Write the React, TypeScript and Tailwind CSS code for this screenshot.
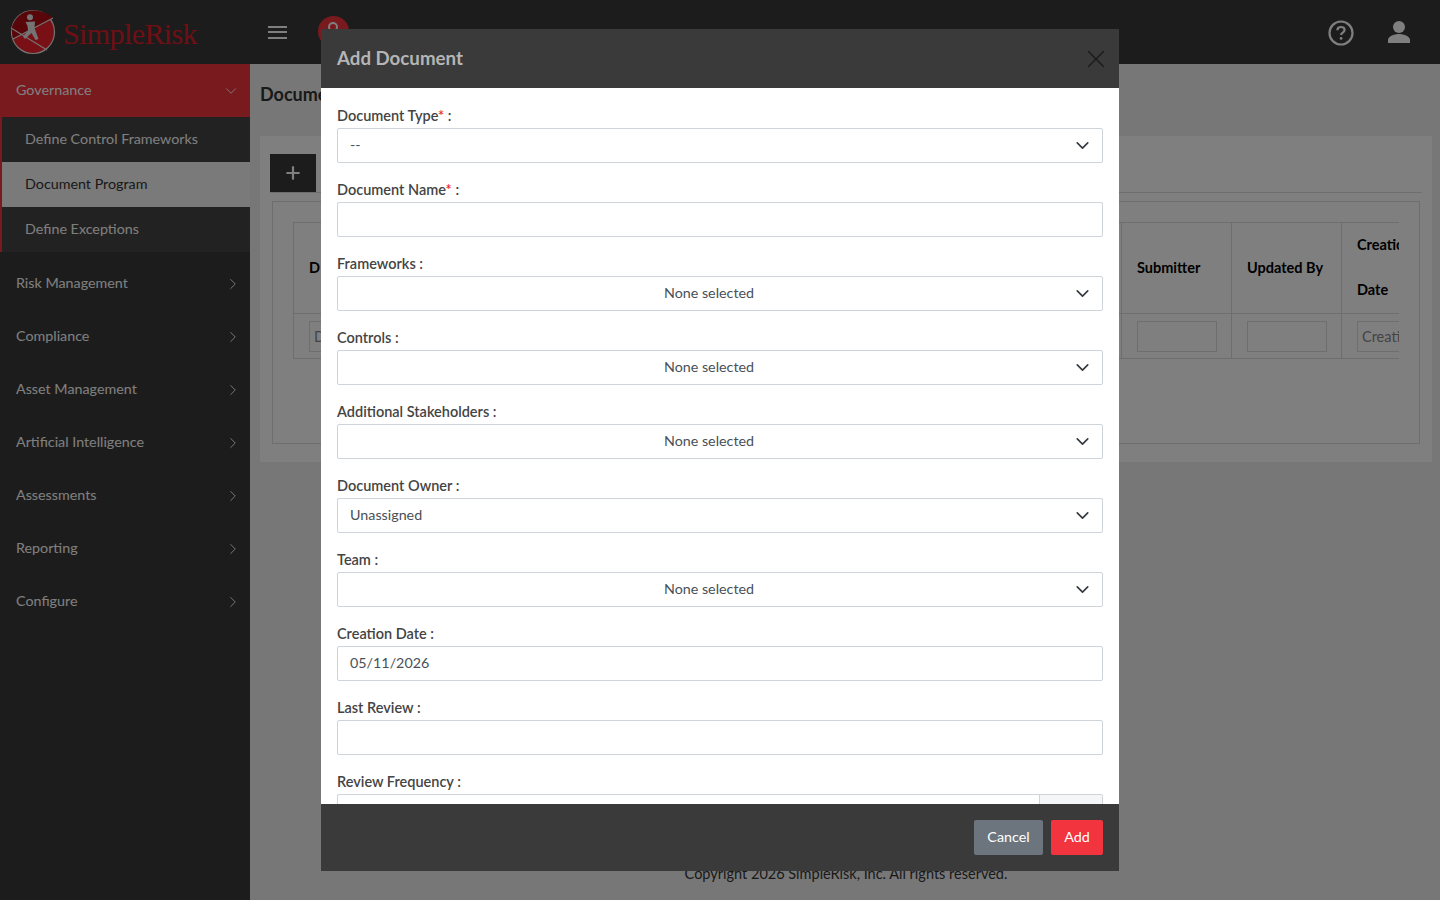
import { ChevronDown, ChevronRight, X, Plus } from 'lucide-react';

const subItems = ['Define Control Frameworks', 'Document Program', 'Define Exceptions'];
const navItems = [
  'Risk Management',
  'Compliance',
  'Asset Management',
  'Artificial Intelligence',
  'Assessments',
  'Reporting',
  'Configure',
];

function Logo() {
  return (
    <svg width="46" height="46" viewBox="0 0 46 46" className="shrink-0">
      <circle cx="23" cy="23" r="21.5" fill="#f0202a" stroke="#e8e8e8" strokeWidth="1.2" />
      <path d="M3 30 L43 9 C38 4 30 1.5 23 1.5 C12 1.5 3 10 1.6 20 Z" fill="#b30d14" />
      <path d="M1 19 L37 41 M3 30 L43 9" stroke="#e8e8e8" strokeWidth="1.2" fill="none" />
      <circle cx="20" cy="8.3" r="3" fill="#e8e8e8" />
      <path d="M15.5 13 L25 12.5 L24.5 19 L28.5 30 L25.5 31 L21.5 24 L15 30 L13 27.5 L18 21.5 L17.5 17 Z" fill="#e8e8e8" />
    </svg>
  );
}

function TopBar() {
  return (
    <div className="h-16 bg-[#393939] flex items-center shrink-0">
      <div className="w-[250px] pl-[10px] flex items-center gap-[7px] shrink-0">
        <Logo />
        <span className="mt-[3px] text-[30px] leading-none text-[#dd1f2a] tracking-[-0.6px] font-['Liberation_Serif',serif]">SimpleRisk</span>
      </div>
      <div className="ml-[18px] flex flex-col gap-[3.5px] w-[19px]">
        <div className="h-[2px] bg-white" />
        <div className="h-[2px] bg-white" />
        <div className="h-[2px] bg-white" />
      </div>
      <svg width="31" height="31" viewBox="0 0 31 31" className="ml-[31px] mb-[2px]">
        <circle cx="15.5" cy="15.5" r="15.5" fill="#f2343e" />
        <circle cx="15" cy="11" r="4" fill="none" stroke="#fff" strokeWidth="2" />
      </svg>
      <div className="ml-auto flex items-center gap-[32px] pr-[29px]">
        <svg width="28" height="28" viewBox="0 0 28 28" fill="none" className="mt-[2px]">
          <circle cx="14" cy="14" r="11.5" stroke="#fff" strokeWidth="2.2" />
          <path d="M10.4 11.2c0-2.1 1.6-3.2 3.6-3.2s3.6 1.1 3.6 3c0 2.7-3.5 2.6-3.5 5" stroke="#fff" strokeWidth="2.2" fill="none" />
          <circle cx="14.1" cy="19.4" r="1.4" fill="#fff" />
        </svg>
        <svg width="24" height="24" viewBox="0 0 24 24" fill="#fff">
          <circle cx="12" cy="7" r="6" />
          <path d="M1 23v-3c0-4 7-6 11-6s11 2 11 6v3z" />
        </svg>
      </div>
    </div>
  );
}

function Sidebar() {
  return (
    <div className="w-[250px] shrink-0 bg-[#383838] text-[14.3px] text-white">
      <div className="h-[53px] bg-[#f2343e] flex items-center justify-between pl-4 pr-[10px]">
        <span className="pb-[2px]">Governance</span>
        <ChevronDown size={18} strokeWidth={1.2} />
      </div>
      <div className="border-l-2 border-[#f2343e] mb-[5px]">
        {subItems.map((item) =>
          item === 'Document Program' ? (
            <div key={item} className="h-[45px] flex items-center pl-[23px] pb-[2px] bg-[#f4f4f4] text-[#333]">
              {item}
            </div>
          ) : (
            <div key={item} className="h-[45px] flex items-center pl-[23px] pb-[2px] bg-[#444]">
              {item}
            </div>
          ),
        )}
      </div>
      {navItems.map((item) => (
        <div key={item} className="h-[53px] flex items-center justify-between pl-4 pr-[8px]">
          <span className="pb-[2px]">{item}</span>
          <ChevronRight size={18} strokeWidth={1.2} />
        </div>
      ))}
    </div>
  );
}

function TableCell({ title, title2, filter }: { title: string; title2?: string; filter?: string }) {
  return (
    <div className="w-[110px] shrink-0 border-l border-[#dcdcdc]">
      <div className="h-[91px] pb-[2px] border-b border-[#dcdcdc] flex flex-col justify-center pl-[15px] text-[14.5px] font-bold text-black gap-[22px] leading-[23px]">
        <span>{title}</span>
        {title2 && <span>{title2}</span>}
      </div>
      <div className="h-[44px] pl-[15px] pt-[7px]">
        <div className="h-[31px] w-[80px] border border-[#dcdcdc] pl-1 text-[14.5px] leading-[29px] text-[#888] overflow-hidden whitespace-nowrap">
          {filter}
        </div>
      </div>
    </div>
  );
}

function MainContent() {
  return (
    <div className="flex-1 min-w-0 bg-[#eeeeee] flex flex-col pl-[10px] pr-2">
      <h2 className="text-[18px] font-bold text-[#333] mt-[18px] h-[54px] leading-6">Document Program</h2>
      <div className="bg-white h-[326px] p-[10px]">
        <div className="h-[38px] mt-2">
          <div className="w-[46px] h-[39px] pb-[1px] bg-[#393939] text-white flex items-center justify-center">
            <Plus size={20} strokeWidth={2.6} />
          </div>
        </div>
        <div className="border-t border-[#dcdcdc]" />
        <div className="border border-[#dcdcdc] mx-[2px] mt-[8px] h-[243px] pt-5 pl-5 pr-5">
          <div className="flex border-t border-b border-l border-[#dcdcdc] h-[137px] overflow-hidden">
            <div className="w-[110px] shrink-0">
              <div className="h-[91px] border-b border-[#dcdcdc] flex items-center pl-[15px] text-[14.5px] font-bold text-black">
                D
              </div>
              <div className="pl-[15px] pt-[7px]">
                <div className="h-[31px] w-[80px] border border-[#dcdcdc] pl-1 text-[14.5px] leading-[29px] text-[#888]">D</div>
              </div>
            </div>
            <div className="flex-1 min-w-0">
              <div className="h-[91px] border-b border-[#dcdcdc]" />
            </div>
            <div className="flex shrink-0 -mr-[52px]">
              <TableCell title="Submitter" />
              <TableCell title="Updated By" />
              <TableCell title="Creation" title2="Date" filter="Creation" />
            </div>
          </div>
        </div>
      </div>
      <div className="mt-auto h-[37px] text-center text-[14.5px] text-[#333]">Copyright 2026 SimpleRisk, Inc. All rights reserved.</div>
    </div>
  );
}

function Field({ label, required, value, center, chevron }: { label: string; required?: boolean; value?: string; center?: boolean; chevron?: boolean }) {
  return (
    <div className="mb-[15px]">
      <div className="h-[24px] text-[14.5px] leading-[23px] font-semibold text-[#444]">
        {label}
        {required && <span className="text-[#f2242e]">*</span>} :
      </div>
      <div className="h-[35px] border border-[#ced4da] rounded-[2px] flex items-center pl-3 pr-[9px] text-[14.3px] text-[#495057]">
        <span className={center ? 'flex-1 text-center mr-[4px] pb-[2px]' : 'flex-1 pb-[2px]'}>{value}</span>
        {chevron && <ChevronDown size={21} strokeWidth={1.9} className="text-[#343a40]" />}
      </div>
    </div>
  );
}

function AddDocumentModal() {
  return (
    <div className="absolute left-[321px] top-[29px] w-[798px] h-[842px] flex flex-col">
      <div className="h-[59px] shrink-0 bg-[#3a3a3a] flex items-center justify-between pl-4 pr-2">
        <span className="text-[18.7px] font-bold text-[#b5b5b5]">Add Document</span>
        <X size={30} strokeWidth={1.2} className="text-[#1c1c1c]" />
      </div>
      <div className="flex-1 min-h-0 bg-white overflow-hidden px-4 pt-4">
        <Field label="Document Type" required value="--" chevron />
        <Field label="Document Name" required />
        <Field label="Frameworks" value="None selected" center chevron />
        <Field label="Controls" value="None selected" center chevron />
        <Field label="Additional Stakeholders" value="None selected" center chevron />
        <Field label="Document Owner" value="Unassigned" chevron />
        <Field label="Team" value="None selected" center chevron />
        <Field label="Creation Date" value="05/11/2026" />
        <Field label="Last Review" />
        <div className="h-[24px] text-[14.5px] leading-[23px] font-semibold text-[#444]">Review Frequency :</div>
        <div className="h-[35px] border border-[#ced4da] rounded-[2px] flex justify-end">
          <div className="w-[63px] bg-[#f5f6f8] border-l border-[#ced4da]" />
        </div>
      </div>
      <div className="h-[67px] shrink-0 bg-[#3a3a3a] flex items-center justify-end gap-2 pr-4">
        <button className="h-[35px] w-[69px] rounded-[2px] bg-[#6c757d] text-white text-[14.3px] pb-[2px]">Cancel</button>
        <button className="h-[35px] w-[52px] rounded-[2px] bg-[#f2343e] text-white text-[14.3px] pb-[2px]">Add</button>
      </div>
    </div>
  );
}

export default function App() {
  return (
    <div className="relative h-[900px] w-[1440px] overflow-hidden font-['Lato',sans-serif] flex flex-col">
      <TopBar />
      <div className="flex flex-1 min-h-0">
        <Sidebar />
        <MainContent />
      </div>
      <div className="absolute inset-0 bg-black/50" />
      <AddDocumentModal />
    </div>
  );
}
